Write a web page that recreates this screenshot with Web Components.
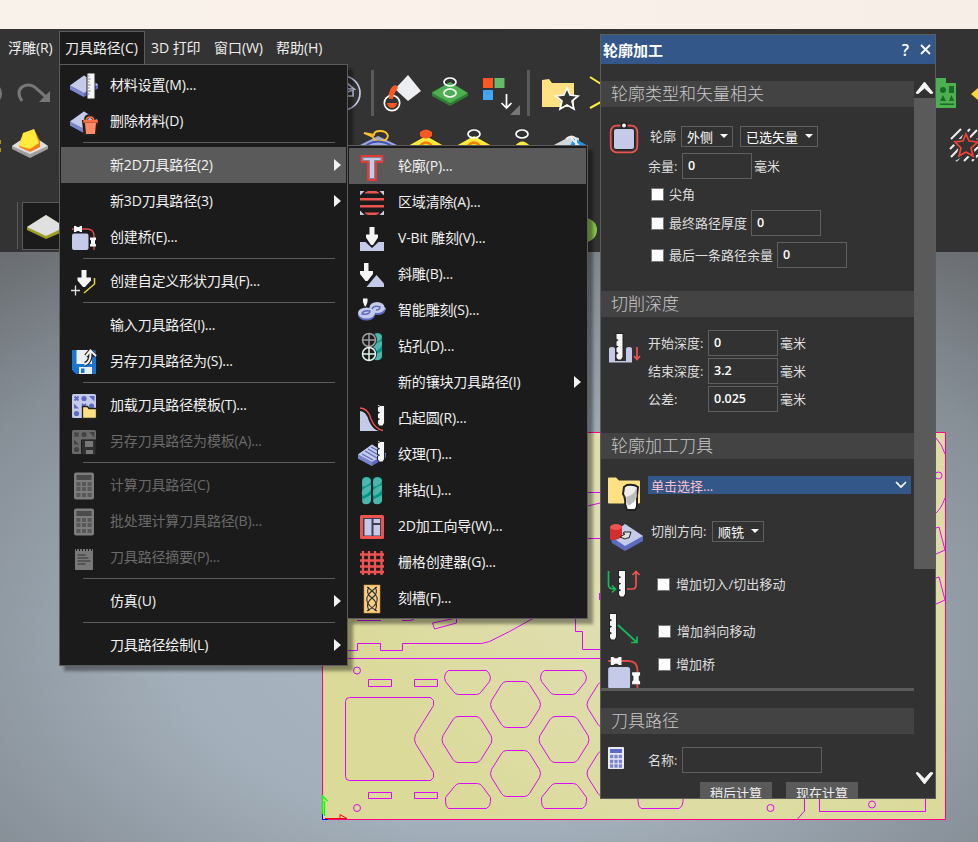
<!DOCTYPE html>
<html lang="zh-CN">
<head>
<meta charset="utf-8">
<title>刀具路径</title>
<style>
html,body{margin:0;padding:0}
body{width:978px;height:842px;overflow:hidden;background:#333;font-family:"Open Sans","Noto Sans CJK SC",sans-serif;font-size:14px;color:#eee}
</style>
</head>
<body>
<cam-app></cam-app>
<script>
const slab='<path d="M0 14.5L14 4.5L28 13.5V17.5L14 26L0 18.5Z" fill="#5c6bc0"/><path d="M0 14.5L14 4.5L28 13.5L14 22Z" fill="#c5cae9"/><path d="M0 14.5V18.5L14 26V22Z" fill="#7986cb"/>';
const bit=(x,y,h)=>{const d=`M${x} ${y}h6v${h-3}l-1.500 2.500h-3l-1.500-2v-3l2.200-1.500l-2.200-1v-4l2.200-1.500l-2.200-1v-4l2.200-1.500l-2.200-1z`;return `<path d="${d}" stroke="#222" stroke-width="2" stroke-linejoin="round"/><path d="${d}" fill="#f5f5f5"/>`;};
const twist=x=>`<rect x="${x}" y="1" width="9" height="27" rx="4" fill="#009688"/><path d="M${x+1} 3q4-4 8 1q0 5-8 7q-2-4 0-8zm8 6v4q-2 5-8 7q-2-2-1-5q2-4 9-6zm0 10v5q-1 5-7 4q-3-2-1-5q2-1 8-4z" fill="#4db6ac"/>`;
const bridge='<path d="M2 6h3M10 6h7q7 0 7 7v2M24 21v6" fill="none" stroke="#e04a45" stroke-width="1.400"/><rect x="2" y="10.500" width="16.500" height="16.500" rx="2" fill="#c5cae9"/><path d="M4 3h2l1 1h2l1-1h2v6h-2l-1-1H7L6 9H4zM20 14.500h6v2l-1 1v3l1 1v2h-6v-2l1-1v-3l-1-1z" fill="#fafafa"/>';
const calc=(a,b,c)=>`<rect x="4" y="1.500" width="20" height="27" rx="2" fill="${a}"/><rect x="6.500" y="4" width="15" height="5" fill="${b}"/><g fill="${c}">`+[11,16,22].map(y=>[6.5,12,17.5].map(x=>`<rect x="${x}" y="${y}" width="4" height="4"/>`).join('')).join('')+'</g>';
const tpl=(a,b)=>`<rect x="2" y="3" width="24" height="24" rx="1.500" fill="${a}"/><g fill="${b}"><circle cx="14" cy="7.500" r="2.600"/><circle cx="6.500" cy="22.500" r="2.600"/><circle cx="21.500" cy="15" r="2.600"/><path d="M19 5h5.500v5.500zM4 12.500v5h5z"/></g><path d="M4.500 5.500l4 4m0-4l-4 4M12 13l4 4m0-4l-4 4" stroke="${b}" stroke-width="1.800"/>`;
const ICONS={
material:slab+'<rect x="16.500" y="1.500" width="9" height="27" rx="1" fill="#222"/><rect x="17.500" y="2.500" width="7" height="25" fill="#f5f5f5"/><path d="M17.500 5h2m-2 3h3m-3 3h2m-2 3h3m-3 3h2m-2 3h3m-3 3h2" stroke="#777" stroke-width=".9"/>',
remove:slab+'<path d="M13 14h14l-1.500 13.500h-11z" fill="#222" stroke="#222" stroke-width="2"/><path d="M16 13q0-4 4-4t4 4" fill="none" stroke="#222" stroke-width="4"/><path d="M15 16h11l-1 11h-9z" fill="#ff8a65"/><path d="M14 13.500h13v1.500H14zM16.500 13q0-3 3.500-3t3.500 3" fill="none" stroke="#ff7043" stroke-width="1.500"/>',
bridge,
shape:'<path d="M11.500 3h5v7.500H21v3L15 20h-2l-5.500-6.500v-3h4z" fill="#f5f5f5"/><path d="M24.500 11v6L14 26" fill="none" stroke="#e6d53a" stroke-width="1.500"/><path d="M1 23.500h9M5.500 18.500v10" stroke="#e0e0e0" stroke-width="1.300"/>',
save:'<path d="M2 3h22q2 0 2 2v22H6l-4-4z" fill="#1976d2"/><path d="M6.500 3H22v14H6.500z" fill="#eceff1"/><path d="M9 20h13v7H9z" fill="#eceff1"/><path d="M11 21.500h3.500V26H11z" fill="#1976d2"/><path d="M15 17q6-2 5.500-12M16 9l4.500-5l5 5" fill="none" stroke="#222" stroke-width="4.500"/><path d="M14.500 17.500q6.500-2 6-12M16 9l4.500-5.500l5.500 5.500" fill="none" stroke="#f5f5f5" stroke-width="2"/>',
load:tpl('#c5cae9','#5c6bc0')+'<path d="M12.500 15.500h5l1.500 2h7.500V27.500h-14z" fill="#ffe082" stroke="#222" stroke-width="1.300"/>',
saveas:tpl('#6a6a6a','#444')+'<path d="M11.500 13h14.500v15H13l-1.500-2z" fill="#303030" stroke="#1b1b1b"/><path d="M15 14h8v6h-8zM16 23h7v4h-7z" fill="#777"/>',
calc:calc('#7c7c7c','#4b4b4b','#585858'),
note:'<path d="M5 6h18v21H5z" fill="#787878"/><path d="M6.500 4v4m3-4v4m3-4v4m3-4v4m3-4v4m3-4v4" stroke="#1b1b1b"/><path d="M7.500 12h8m-8 3h11m-11 3h13m-13 3h8" stroke="#303030" stroke-width="1.200"/>',
tee:'<path d="M3.500 4h21v6H18v18h-8V10H3.500z" fill="#c5cae9" stroke="#e53935" stroke-width="2" stroke-linejoin="round"/><path d="M5 5.500h18v3h-6.500v18h-5v-18H5z" fill="#c5cae9" stroke="#666" stroke-width=".7"/>',
area:'<path d="M2 3h4.500l-4.500 4.500zM26 3v4.500L21.500 3zM2 27v-4.500L6.500 27zM26 27v-4.500L21.500 27z" fill="#c5cae9"/><path d="M7 4.500l3-1.500h8l3 1.500v1H7zM2 10h24v2.500H2zM2 17h24v2.500H2zM7 24.500h14v1L18 27h-8l-3-1.500z" fill="#ef5350"/>',
vbit:'<path d="M2 18h5.500L14 24l6.500-6H26v9H2z" fill="#c5cae9"/><path d="M11.500 3h5v7.500H20v3L15 21h-2l-5-7.500v-3h3.500z" fill="#f5f5f5"/>',
bevel:'<path d="M6 3h4.500v8H15v3L9.500 21h-2L2 14v-3h4z" fill="#f5f5f5"/><path d="M8.500 27L18.500 15L26 23.500V27z" fill="#c5cae9"/>',
smart:'<g fill="#5c6bc0"><ellipse cx="8.500" cy="19" rx="8.500" ry="5.500"/><ellipse cx="19.500" cy="13.500" rx="8" ry="5.500"/><path d="M19 13l9 0-2 4-7 1z"/></g><g fill="#c5cae9"><ellipse cx="8.500" cy="17" rx="8.500" ry="5.500"/><ellipse cx="19" cy="11.500" rx="7.500" ry="5.500"/><path d="M20 8l8 4.500-4 3-6 0z"/></g><g fill="none" stroke="#5c6bc0" stroke-width="1.400"><path d="M4 18q1-4 8-3q0 4-8 3zM14 13q2-4 8-2q0 3-4 3"/></g><path d="M4.500 2h5.500v4l-2 5h-1.500l-2-5z" fill="#f5f5f5" stroke="#222"/>',
drill:twist(15)+'<g fill="#1b1b1b"><circle cx="11" cy="8" r="8"/><circle cx="11" cy="22" r="8"/></g><g fill="none" stroke-width="1.500"><path d="M4 8h14M11 1v14M4.500 8a6.500 6.500 0 1013 0a6.500 6.500 0 10-13 0" stroke="#9e9e9e"/><path d="M4 22h14M11 15v14M4.500 22a6.500 6.500 0 1013 0a6.500 6.500 0 10-13 0" stroke="#e0f2ef"/></g>',
turn:'<path d="M2 7q6 0 9 10q4 9 10 10H2z" fill="#c5cae9"/><path d="M2 4q8 0 11 11q4 10 12 11.500" fill="none" stroke="#ef5350" stroke-width="1.300"/>'+bit(20,2,20),
texture:slab+'<path d="M4 14l11 6m-8-9l12 7m-9-9l12 7m-9-9l11 6" stroke="#5c6bc0" stroke-width="1.400"/>'+bit(20,2,20),
bank:twist(4)+twist(15),
wizard:'<path d="M3.500 4.500h21v21h-21z" fill="#3b3f52" stroke="#ef5350" stroke-width="3" stroke-linejoin="round"/><path d="M6.500 7h7v16.500h-7zM15.500 7H22v4h-6.500zM15.500 13H22v10.500h-6.500z" fill="#c5cae9"/>',
mesh:'<path d="M5 3v24M11 3v24M17 3v24M23.500 3v24M2 6.500h24M2 12.500h24M2 18.500h24M2 24h24" stroke="#ef5350" stroke-width="2.300"/>',
flute:'<rect x="6" y="1" width="16" height="28" fill="#ffcc80" stroke="#c98b3b" stroke-width=".6"/><path d="M9 3q12 8 10 14q-1 5-10 10M19 3Q7 11 9 17q1 5 10 10M11 3q-4 6 3 11q7 5 3 13M17 3q4 6-3 11q-7 5-3 13" fill="none" stroke="#263238" stroke-width="1.100"/>'
};
const make=(tag,css,html,init)=>{
  const t=document.createElement('template');
  t.innerHTML=`<style>${css}</style>${html}`;
  customElements.define(tag,class extends HTMLElement{
    constructor(){super();this.attachShadow({mode:'open'}).append(t.content.cloneNode(true));}
    connectedCallback(){if(init)init(this,this.shadowRoot);}
  });
};

make('cam-bar',':host{display:flex;height:35px;padding-top:2px;box-sizing:border-box;background:#333}','<slot></slot>');
make('bar-item',':host{display:block;box-sizing:border-box;height:33px;padding:0 6px;white-space:nowrap;border:1px solid transparent;border-bottom:0;line-height:32px;letter-spacing:-.05px}:host([open]){background:#1b1b1b;border-color:#5c5c5c}','<slot></slot>');

make('cam-menu',':host{display:flex;flex-direction:column;box-sizing:border-box;border:1px solid #5c5c5c;padding:2px 1px;background:#1b1b1b;box-shadow:5px 5px 3px rgba(0,0,0,.38)}','<slot></slot>');
make('menu-item',`:host{display:flex;align-items:center;height:36px;box-sizing:border-box;padding:0 5px 0 9px;color:#f2f2f2}
:host([active]){background:#5a5a5a}:host([disabled]){color:#6a6a6a}
svg{width:28px;height:28px;flex:none;margin-right:12px;overflow:visible}
span{flex:1;white-space:nowrap;line-height:36px;letter-spacing:-.16px}
i{display:none;border-left:7px solid #f2f2f2;border-top:6px solid transparent;border-bottom:6px solid transparent}
:host([more]) i{display:block}`,'<svg viewBox="0 0 28 28"></svg><span><slot></slot></span><i></i>',
(h,r)=>{r.querySelector('svg').innerHTML=ICONS[h.getAttribute('icon')]||'';});
make('menu-line',':host{display:block;height:1px;margin:3px 11px 4px 22px;background:#5c5c5c}','');

make('panel-title',':host{display:flex;flex:none;align-items:center;box-sizing:border-box;height:29px;padding:0 4px 0 2px;background:#335788;font-size:15px;color:#fff}b{flex:1;font-weight:700}span{font-weight:600;font-size:16px;margin-right:11px}svg{width:11px;height:11px}','<b><slot></slot></b><span>?</span><svg viewBox="0 0 11 11"><path d="M1 1l9 9M10 1l-9 9" stroke="#fff" stroke-width="1.800"/></svg>');
make('panel-head',':host{display:block;height:26px;line-height:25px;padding-left:10px;background:#434343;color:#c8c8c8;font-size:17px;font-weight:300}','<slot></slot>');
make('form-group',':host{display:grid;grid-template-columns:47px 1fr;box-sizing:border-box;font-size:13px;color:#dedede}','<slot name="art"></slot><div><slot></slot></div>');
make('form-row',':host{display:flex;align-items:center;white-space:nowrap}','<slot></slot>',(h)=>{h.style.height=h.getAttribute('h')+'px';h.style.paddingLeft=(h.getAttribute('x')||0)+'px';});
make('form-label',':host{display:block;flex:none;padding-bottom:1px}','<slot></slot>',(h)=>{if(h.hasAttribute('w'))h.style.width=h.getAttribute('w')+'px';});
make('text-box',':host{display:block;flex:none;box-sizing:border-box;width:70px;height:26px;border:1px solid #5f5f5f;padding-left:5px;line-height:23px;color:#fff;font-weight:600;font-size:12.500px;margin-right:2px}','<slot></slot>');
make('check-box',':host{display:block;flex:none;box-sizing:border-box;width:13px;height:13px;background:#fff;border:1px solid #777;margin-right:5px}','');
make('drop-down',':host{display:flex;flex:none;align-items:center;justify-content:space-between;box-sizing:border-box;height:21px;border:1px solid #5f5f5f;padding:0 4px 0 5px;color:#fff}i{border-top:4px solid #fff;border-left:4px solid transparent;border-right:4px solid transparent}','<span><slot></slot></span><i></i>',(h)=>{h.style.width=h.getAttribute('w')+'px';});
make('tool-picker',':host{display:flex;flex:none;align-items:center;justify-content:space-between;box-sizing:border-box;width:263px;height:18px;background:#335788;color:#ffc0cb;padding:0 4px 0 3px}svg{width:12px;height:8px}','<span><slot></slot></span><svg viewBox="0 0 12 8"><path d="M1 1l5 5l5-5" fill="none" stroke="#fff" stroke-width="1.700"/></svg>');
make('push-button',':host{display:block;width:72px;height:24px;line-height:23px;text-align:center;background:#5a5a5a;color:#eee;font-size:13px}','<slot></slot>');
make('scroll-bar',':host{display:flex;flex-direction:column;justify-content:space-between;width:21px;height:708px;box-sizing:border-box}div{display:flex;flex-direction:column}i{display:block;height:471px;background:#5a5a5a}svg{display:block;width:21px;height:17px}',
'<div><svg viewBox="0 0 21 17"><path d="M2 12L10.500 1L19 12L16.500 12.500L10.500 7L4 12.500Z" fill="#f5f5f5" stroke="#f5f5f5"/></svg><i></i></div><svg viewBox="0 0 21 17"><path d="M2 0L10.500 11L19 0L16.500-.5L10.500 6L4-.5Z" fill="#f5f5f5" stroke="#f5f5f5" transform="translate(0 1)"/></svg>');

make('profile-panel',`:host{display:flex;flex-direction:column;box-sizing:border-box;border:1px solid #5c5c5c;background:#323232;overflow:hidden}
.cols{display:flex;flex:none;height:717px;padding-top:17px}.main{width:313px;flex:none}.scroll{height:607px;overflow:hidden;border-bottom:3px solid #5a5a5a}
.g1{padding-top:15px;height:184px}.g2{padding-top:12px;height:116px}.g3{padding-top:10px}
.low{padding-top:17px}.g4{padding-top:10px}svg{width:47px;overflow:visible}.btn{gap:14px}.in{margin-left:1px;letter-spacing:.1px}`,
`<panel-title>轮廓加工</panel-title><div class="cols"><div class="main"><div class="scroll">
<panel-head>轮廓类型和矢量相关</panel-head>
<form-group class="g1"><svg slot="art" height="40" viewBox="0 0 47 40"><rect x="9.700" y="3.700" width="26.600" height="26.600" rx="6" fill="none" stroke="#ef5350" stroke-width="1.800"/><rect x="12.500" y="6.500" width="21" height="21" rx="2.500" fill="#c5cae9" stroke="#222"/><circle cx="23" cy="3.500" r="3.500" fill="#222"/><circle cx="23" cy="3.500" r="2" fill="#fff"/></svg>
<form-row h="28" x="2"><form-label w="31">轮廓</form-label><drop-down w="52">外侧</drop-down><form-label w="7"></form-label><drop-down w="78">已选矢量</drop-down></form-row>
<form-row h="32"><form-label w="34">余量:</form-label><text-box>0</text-box><form-label>毫米</form-label></form-row>
<form-row h="24" x="3"><check-box></check-box><form-label>尖角</form-label></form-row>
<form-row h="34" x="3"><check-box></check-box><form-label w="82">最终路径厚度</form-label><text-box>0</text-box></form-row>
<form-row h="30" x="3"><check-box></check-box><form-label w="108">最后一条路径余量</form-label><text-box>0</text-box></form-row></form-group>
<panel-head>切削深度</panel-head>
<form-group class="g2"><svg slot="art" height="40" viewBox="0 0 47 40"><path d="M8 20q0-2 3-2q3 0 3 2v12h11V20q0-2 3-2q3 0 3 2v13.500H8z" fill="#c5cae9"/><path d="M36 18v12M33 27l3 3.500l3-3.500" fill="none" stroke="#ef5350" stroke-width="1.700"/>${bit(15.5,5,26)}</svg>
<form-row h="28"><form-label w="60">开始深度:</form-label><text-box>0</text-box><form-label>毫米</form-label></form-row>
<form-row h="28"><form-label w="60">结束深度:</form-label><text-box>3.2</text-box><form-label>毫米</form-label></form-row>
<form-row h="28"><form-label w="60">公差:</form-label><text-box>0.025</text-box><form-label>毫米</form-label></form-row></form-group>
<panel-head>轮廓加工刀具</panel-head>
<form-group class="g3"><svg slot="art" height="220" viewBox="0 469 47 220">
<path d="M7 478.500q0-1 1-1h7l3 3h20q1 0 1 1v21q0 1-1 1H8q-1 0-1-1z" fill="#ffe082"/><path d="M23 487l3-2q7-1 11 2l-1 9v11l-2 3h-8l-2-6q1-6-2-10z" fill="#eee" stroke="#222" stroke-width="2"/><path d="M25 497q8-2 10-8l1 7q-1 6-9 10z" fill="#bdbdbd"/><path d="M26 506q8-3 9-7v7l-2 3h-6z" fill="#fff"/>
<path d="M9 536L24 524L42 536V541L24 551L11 543Z" fill="#5c6bc0"/><path d="M9 536L24 524L42 536L24 546Z" fill="#c5cae9"/><path d="M9 527v12q5 3 12-2v-10z" fill="#d32f2f"/><ellipse cx="15" cy="527" rx="6" ry="3" fill="#ef5350"/><path d="M19 537l5-3h-2l1-2h7l-2 6h-2l-2 1z" fill="#e0e0e0" stroke="#222"/>
<path d="M7.500 571v14q0 4 6 4M11 585.500l3.500 3.500l-3.500 3.500" fill="none" stroke="#19b85a" stroke-width="1.700"/><path d="M26 589h5q4 0 4-4v-13M31.500 575l3.500-3.500l3.500 3.500" fill="none" stroke="#ef5350" stroke-width="1.700"/>${bit(18,571,26)}
${bit(9,614,26)}<path d="M17 625l19 17.500M30 642.500h6v-6" fill="none" stroke="#19b85a" stroke-width="1.700"/>
<g transform="translate(4.500 653) scale(1.330)">${bridge}</g></svg>
<form-row h="32"><tool-picker>单击选择...</tool-picker></form-row>
<form-row h="60" x="3"><form-label w="61">切削方向:</form-label><drop-down w="52">顺铣</drop-down></form-row>
<form-row h="46" x="9"><check-box></check-box><form-label class="in">增加切入/切出移动</form-label></form-row>
<form-row h="48" x="10"><check-box></check-box><form-label class="in">增加斜向移动</form-label></form-row>
<form-row h="18" x="10"><check-box></check-box><form-label>增加桥</form-label></form-row></form-group>
</div><div class="low"><panel-head>刀具路径</panel-head>
<form-group class="g4"><svg slot="art" height="30" viewBox="0 0 47 30"><rect x="7" y="3" width="16" height="22" rx="1" fill="#e8eaf6"/><path d="M9 5h12v4H9z" fill="#5c6bc0"/><path d="M9 12.500h12M9 17.500h12M9 22h12" stroke="#7986cb" stroke-width="3.300" stroke-dasharray="3.300 1.050"/></svg>
<form-row h="32"><form-label w="34">名称:</form-label><text-box style="width:140px"></text-box></form-row>
<form-row h="36" x="52" class="btn"><push-button>稍后计算</push-button><push-button>现在计算</push-button></form-row></form-group></div></div>
<scroll-bar></scroll-bar></div>`);

make('tool-strip',':host{display:block;height:188px}svg{display:block}',`<svg width="978" height="188" viewBox="0 64 978 188">
<path d="M0 87q4 7 0 13" fill="#777"/><path d="M22 101q-6-9 0-14q8-5 16 3l8 7" fill="none" stroke="#777" stroke-width="3"/><path d="M50 91v11H39z" fill="#777"/><path d="M0 140v4m0 4v4" stroke="#c08a20" stroke-width="2"/>
<path d="M12 146L30 134L48 146V149L30 158L12 149Z" fill="#9e9e9e"/><path d="M12 146L30 134L48 146L30 154Z" fill="#e0e0e0"/><path d="M19 147l2-9 13-9 6 12v6l-10 5z" fill="#f57f17"/><path d="M19 146l4-13 11-4 5 14-9 6z" fill="#ffeb3b"/>
<path d="M17.500 202v47" stroke="#5a5a5a"/><path d="M22.500 202.500H70V249.500H22.500z" fill="#1b1b1b" stroke="#5a5a5a"/><path d="M27 227L46 215L65 227V231L46 239L27 230Z" fill="#9e9d24"/><path d="M27 227L46 215L65 227L46 236Z" fill="#e0e0e0"/>
<g fill="none" stroke="#c5cae9" stroke-width="1.700"><circle cx="343" cy="93" r="17"/><path d="M333 88l12-7 9 8zM337 96h16v-6z"/></g>
<path d="M372.500 70v46M528.500 70v46" stroke="#5a5a5a" stroke-width="3"/>
<path d="M395 89l13-14 13 16-13 10z" fill="#eceff1"/><path d="M388 100q1-14 8-15l2 3q-4 4-5 12z" fill="#ff5722"/><circle cx="392" cy="103" r="7.700" fill="#333" stroke="#fff" stroke-width="1.700"/><path d="M389 99l1-8 4 0-1 8z" fill="#ff5722"/><path d="M387 103h10q-1 5-5 5t-5-5z" fill="#ff5722"/>
<path d="M432 92L450 82L468 94V96L450 106L432 96Z" fill="#2e7d32"/><path d="M432 93L450 82L468 93L450 103Z" fill="#4caf50"/><g fill="none" stroke="#fff" stroke-width="1.700"><ellipse cx="450" cy="82" rx="6" ry="4"/><ellipse cx="450" cy="93" rx="6" ry="4"/></g>
<path d="M483 78h10v10h-10z" fill="#ff5722"/><path d="M494.500 78h10v10h-10z" fill="#66bb6a"/><path d="M483 90h10v10h-10z" fill="#42a5f5"/><path d="M506.500 94v14m-5-5l5 5 5-5" fill="none" stroke="#fff" stroke-width="1.700"/><path d="M520 105v10h-10z" fill="#777"/>
<path d="M542 80l7-1 3 4h22v24h-32z" fill="#ffe082"/><path d="M567 88l3 7 8 1-6 5 2 8-7-4-7 4 2-8-6-5 8-1z" fill="#333" stroke="#fff" stroke-width="1.700"/><path d="M590 77l11 7M590 108l11-6" stroke="#ffeb3b" stroke-width="2"/>
<path d="M360 145l18-9 19 9z" fill="#9fa8da"/><path d="M364 133l10 2q0-4 6-4 7 0 8 5-1 5-8 5-6 0-7-4z" fill="none" stroke="#fbc02d" stroke-width="1.800"/><path d="M363 148q14-13 32 0" fill="none" stroke="#3f51b5" stroke-width="2"/>
<path d="M408 146l18-10 18 10zM456 146l18-10 18 10zM515 146q7-9 15 0z" fill="#ffeb3b"/><path d="M420 146q6-7 12 0M468 146q6-7 12 0" stroke="#f57c00" stroke-width="2.500" fill="#ffeb3b"/><path d="M420 132q6-5 12 0v4q-6 5-12 0z" fill="#ff5722"/><g fill="none" stroke="#fff" stroke-width="1.700"><ellipse cx="474" cy="134" rx="6" ry="4"/><ellipse cx="522" cy="134" rx="6" ry="4"/></g><path d="M552 146l19-10 8 2v8z" fill="#cfd8dc"/><path d="M574 138l14 8h-18z" fill="#2196f3"/><path d="M566 139q6-5 10 0v7m-5-8l8 8" stroke="#eee" fill="none" stroke-width="2"/>
<circle cx="585" cy="230" r="12" fill="#8bc34a"/>
<path d="M936 78h10v5h10v25h-20z" fill="#4caf50"/><g fill="#1b6b28"><circle cx="943" cy="90" r="3"/><path d="M949 86h5v7h-5zM940 101l3-6 3 6zM949 101l2.500-6 2.500 6zM940 103.500h14v1.500h-14z"/></g><path d="M971 94l7-6v12z" fill="#fdd835"/>
<path d="M951 139l10-10M950 149l20-20M951 157l26-27M956 161l22-22M964 161l14-14M972 161l6-6" stroke="#eee" stroke-width="2"/><path d="M966 134l3 7 9 1-7 6 2 8-7-4-7 4 2-8-6-6 8-1z" fill="#333" stroke="#333" stroke-width="5"/><path d="M966 134l3 7 9 1-7 6 2 8-7-4-7 4 2-8-6-6 8-1z" fill="#333" stroke="#f44336" stroke-width="1.700"/></svg>`);

const hex=(x,y)=>`M${x-25} ${y}l1-4L${x-14} ${y-20}q2-3 5-3h18q3 0 5 3L${x+24} ${y-4}q2 4 0 8L${x+14} ${y+20}q-2 3-5 3h-18q-3 0-5-3L${x-24} ${y+4}z`;
const topT=x=>`M${x-19} 670.500h38q3 2 4 7l-1 4-8 10q-2 3-5 3h-18q-3 0-5-3l-8-10-1-4q0-5 4-7z`;
const botT=x=>`M${x-19} 808.500h38q4-2 4-7v-4l-8-11q-2-3-5-3h-18q-3 0-5 3l-9 11v4q0 5 3 7z`;
make('work-view',':host{display:block;height:590px}svg{display:block}',`<svg width="978" height="590" viewBox="0 252 978 590">
<defs><radialGradient id="b" gradientUnits="userSpaceOnUse" cx="0" cy="0" r="1" gradientTransform="translate(489 640) scale(800 480)"><stop offset="0" stop-color="#adbac6"/><stop offset=".4" stop-color="#a2aeb9"/><stop offset=".75" stop-color="#868e96"/><stop offset="1" stop-color="#6a6e72"/></radialGradient><radialGradient id="p" gradientUnits="userSpaceOnUse" cx="700" cy="530" r="380"><stop offset="0" stop-color="#e1e0bc"/><stop offset="1" stop-color="#dbda99"/></radialGradient></defs>
<path d="M0 252h978v590H0z" fill="url(#b)"/><path d="M322.500 432.500h623v387h-623z" fill="url(#p)" stroke="#ff0084"/>
<g fill="none" stroke="#dc0af5"><path d="M348 650.500h9.500v-7h23v7h22v-7h79l8-2 20-10 27-15M323 658.500h278M575.500 615v16.500h7v18h19M357 620.500h24m21 0h8l4-1M432.500 623l24-5v5l-22 6z"/>
<path d="M368.500 679.500h23v7h-23zM414.500 679.500h23v7h-23zM368.500 792.500h23v6h-23zM414.500 792.500h23v6h-23zM349.500 697.500h81l3 3v5l-18 29q-2 5 0 9l18 29v5l-3 3h-81q-4 0-4-4v-75q0-4 4-4z"/>
<path d="${hex(467,739.5)}${hex(515.5,704.5)}${hex(515.5,773.5)}${hex(564,739.5)}${hex(612,704.5)}${hex(612,773.5)}${topT(467.5)}${topT(563.5)}${botT(467.5)}${botT(563.5)}${botT(660)}"/>
<circle cx="357" cy="670.500" r="3.500"/><circle cx="357" cy="808" r="3.500"/><circle cx="770.500" cy="808" r="3.500"/><circle cx="872" cy="804.500" r="3.500"/><circle cx="938.500" cy="475.500" r="3.500"/>
<path d="M804.500 799v12l-7 8M819.500 799v12.500h106V799M936 438q6 6 9 16M945 498q-4 11-9 15M936 528l3-1 6 23-9 4M936 578l3-1 6 23-9 4M588 492.500h12M588 506l12-3M588 538.500h12M599.500 593v7"/></g>
<path d="M322.500 815v-19l5 5M324.500 801v15" fill="none" stroke="#0f0" stroke-width="1.300"/><path d="M325 818.500h22l-7-4v4" fill="none" stroke="red"/><path d="M322.500 814v5.500h5" fill="none" stroke="#00f"/></svg>`);

make('cam-app',`:host{display:flex;flex-direction:column;width:978px;height:842px;position:relative;overflow:hidden;background:#333}
header{height:29px;background:linear-gradient(90deg,#f9f2eb,#f8eee8)}
cam-menu,profile-panel{position:absolute}
.main{left:59px;top:64px;width:289px;height:602px}.sub{left:347px;top:145px;width:241px;height:474px;z-index:2}
profile-panel{left:600px;top:34px;width:336px;height:765px}`,
`<header></header>
<cam-bar><bar-item style="margin-left:1px;width:58px">浮雕(R)</bar-item><bar-item open style="width:86px;padding-left:5px">刀具路径(C)</bar-item><bar-item style="width:63px;padding-left:5px">3D 打印</bar-item><bar-item style="width:62px;padding-left:5px">窗口(W)</bar-item><bar-item style="padding-left:5px">帮助(H)</bar-item></cam-bar>
<tool-strip></tool-strip><work-view></work-view>
<profile-panel></profile-panel>
<cam-menu class="main">
<menu-item icon="material">材料设置(M)...</menu-item><menu-item icon="remove">删除材料(D)</menu-item><menu-line></menu-line>
<menu-item active more>新2D刀具路径(2)</menu-item><menu-item more>新3D刀具路径(3)</menu-item><menu-item icon="bridge">创建桥(E)...</menu-item><menu-line></menu-line>
<menu-item icon="shape">创建自定义形状刀具(F)...</menu-item><menu-line></menu-line>
<menu-item>输入刀具路径(I)...</menu-item><menu-item icon="save">另存刀具路径为(S)...</menu-item><menu-line></menu-line>
<menu-item icon="load">加载刀具路径模板(T)...</menu-item><menu-item icon="saveas" disabled>另存刀具路径为模板(A)...</menu-item><menu-line></menu-line>
<menu-item icon="calc" disabled>计算刀具路径(C)</menu-item><menu-item icon="calc" disabled>批处理计算刀具路径(B)...</menu-item><menu-item icon="note" disabled>刀具路径摘要(P)...</menu-item><menu-line></menu-line>
<menu-item more>仿真(U)</menu-item><menu-line></menu-line><menu-item more>刀具路径绘制(L)</menu-item>
</cam-menu>
<cam-menu class="sub">
<menu-item icon="tee" active>轮廓(P)...</menu-item><menu-item icon="area">区域清除(A)...</menu-item><menu-item icon="vbit">V-Bit 雕刻(V)...</menu-item><menu-item icon="bevel">斜雕(B)...</menu-item><menu-item icon="smart">智能雕刻(S)...</menu-item><menu-item icon="drill">钻孔(D)...</menu-item><menu-item more>新的镶块刀具路径(I)</menu-item><menu-item icon="turn">凸起圆(R)...</menu-item><menu-item icon="texture">纹理(T)...</menu-item><menu-item icon="bank">排钻(L)...</menu-item><menu-item icon="wizard">2D加工向导(W)...</menu-item><menu-item icon="mesh">栅格创建器(G)...</menu-item><menu-item icon="flute">刻槽(F)...</menu-item>
</cam-menu>`);
</script>
</body>
</html>
